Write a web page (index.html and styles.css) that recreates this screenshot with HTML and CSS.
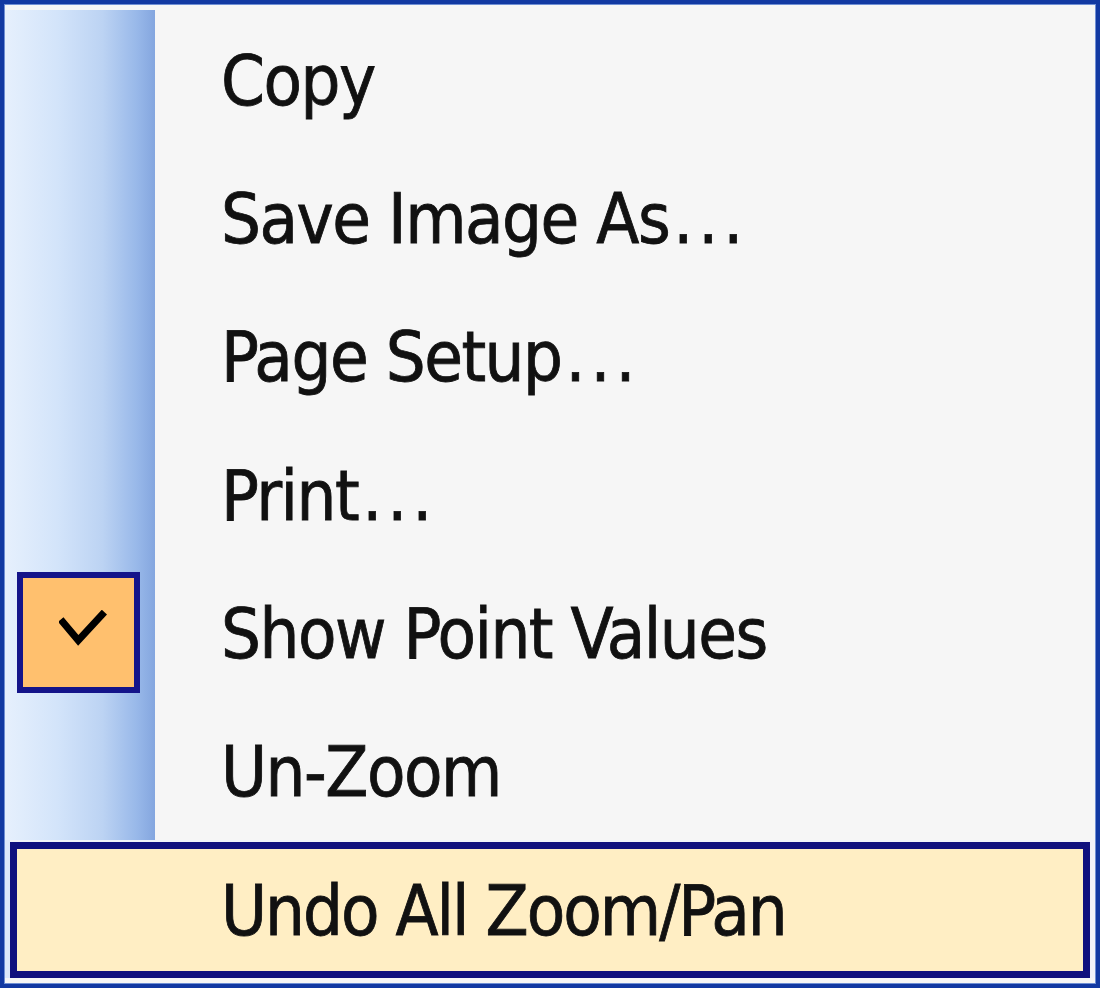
FILE: index.html
```html
<!DOCTYPE html>
<html>
<head>
<meta charset="utf-8">
<link rel="stylesheet" href="styles.css">
</head>
<body>
<div class="menu">
  <ul class="list">
    <li class="item"><span class="gutter"></span><span class="label">Copy</span></li>
    <li class="item"><span class="gutter"></span><span class="label">Save Image As<span class="dots">...</span></span></li>
    <li class="item"><span class="gutter"></span><span class="label">Page Setup<span class="dots">...</span></span></li>
    <li class="item"><span class="gutter"></span><span class="label">Print<span class="dots">...</span></span></li>
    <li class="item"><span class="gutter"><span class="check"><svg class="tick" viewBox="0 0 50 40" width="48" height="38"><polyline points="4,13 20,32 45,5" fill="none" stroke="#000" stroke-width="7.5" stroke-linejoin="miter" stroke-linecap="square"/></svg></span></span><span class="label">Show Point Values</span></li>
    <li class="item"><span class="gutter"></span><span class="label">Un-Zoom</span></li>
    <li class="item hot-wrap"><span class="hot"><span class="label hot-label">Undo All Zoom/Pan</span></span></li>
  </ul>
</div>
</body>
</html>
```
FILE: styles.css
```css
html, body {
  margin: 0;
  padding: 0;
  background: #ffffff;
}
.menu {
  width: 1100px;
  height: 988px;
  box-sizing: border-box;
  border: 4px solid #1239a2;
  box-shadow: inset 0 0 0 1px #6f8fd4;
  background: #f6f6f6;
  padding: 6px 1px 5px 1px;
  font-family: "DejaVu Sans Condensed", "DejaVu Sans", sans-serif;
  font-size: 70px;
  letter-spacing: -1.5px;
  color: #111111;
  -webkit-text-stroke: 0.8px #111111;
}
.list {
  list-style: none;
  margin: 0;
  padding: 0;
  display: flex;
  flex-direction: column;
}
.item {
  height: 138.3px;
  display: flex;
  align-items: stretch;
}
.gutter {
  width: 150px;
  flex: none;
  background: linear-gradient(to right, #e6f0fd 0%, #d3e4fa 35%, #bcd3f3 65%, #98b8e9 88%, #84a6df 100%);
  display: flex;
  align-items: center;
  padding-left: 12px;
  box-sizing: border-box;
}
.label {
  display: flex;
  align-items: center;
  padding-left: 66px;
  line-height: 1;
  padding-top: 3px;
  white-space: nowrap;
}
.dots {
  letter-spacing: 5px;
  margin-left: 4px;
}
.check {
  width: 123px;
  height: 121px;
  box-sizing: border-box;
  border: 6px solid #14148a;
  background: #ffc06e;
  display: flex;
  align-items: center;
  justify-content: center;
}
.tick {
  display: block;
  margin-left: 8px;
  margin-bottom: 6px;
}
.hot-wrap {
  padding: 2px 5px 0 5px;
  background: linear-gradient(to right, #dce8fa 0, #dce8fa 5px, #f2f3f9 5px);
  box-sizing: border-box;
}
.hot {
  flex: 1;
  display: flex;
  box-sizing: border-box;
  border: 7px solid #10107e;
  background: #ffeec4;
}
.hot-label {
  padding-left: 204px;
  letter-spacing: -2px;
}
```
